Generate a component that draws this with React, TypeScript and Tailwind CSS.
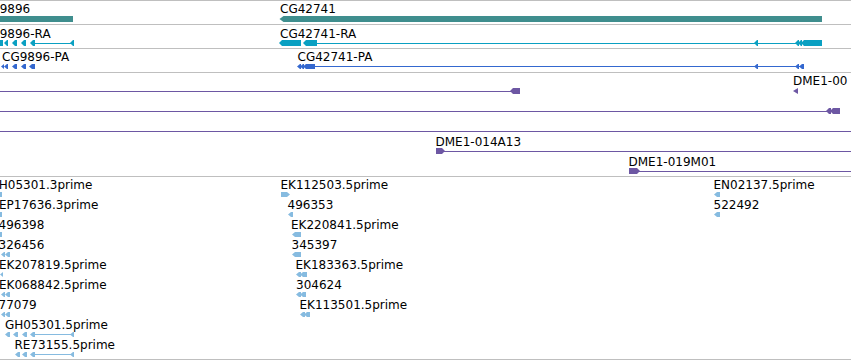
import type { ReactNode } from 'react';

const GENE = '#3f8e8e';
const RA = '#0aa0c2';
const PA = '#3468cf';
const CLONE = '#6d57a3';
const EST = '#86bbe0';

// left pointing exon: tip at x1, box to x2
function la(x1: number, x2: number, y1: number, y2: number, tip = 3) {
    const m = (y1 + y2) / 2;
    const k = Math.min(x1 + tip, x2);
    return `${x1},${m} ${k},${y1} ${x2},${y1} ${x2},${y2} ${k},${y2}`;
}
function ra(x1: number, x2: number, y1: number, y2: number, tip = 3) {
    const m = (y1 + y2) / 2;
    const k = Math.max(x2 - tip, x1);
    return `${x1},${y1} ${k},${y1} ${x2},${m} ${k},${y2} ${x1},${y2}`;
}

type Exon = [number, number];
type Feat = {
    label: string;
    lx: number;
    exons: Exon[];
    line?: [number, number];
    dir?: 'l' | 'r';
};

// one track: gray rule on top, a drawing in page coordinates below it
function Track({ top, inner, className, children }: { top: number; inner: number; className: string; children: ReactNode }) {
    return (
        <div className={`shrink-0 border-t border-[#bfbfbf] ${className}`}>
            <svg width={851} height={inner} viewBox={`0 ${top + 1} 851 ${inner}`} className="block" shapeRendering="crispEdges">
                {children}
            </svg>
        </div>
    );
}

function Row({ f, y1, y2, base, color }: { f: Feat; y1: number; y2: number; base: number; color: string }) {
    const mid = Math.floor((y1 + y2) / 2) + 0.5;
    return (
        <g>
            <text x={f.lx} y={base} fontSize={12} fill="#000" shapeRendering="auto">{f.label}</text>
            {f.line && <line x1={f.line[0]} x2={f.line[1]} y1={mid} y2={mid} stroke={color} strokeWidth={1} />}
            {f.exons.map(([a, b], i) => (
                <polygon key={i} points={f.dir === 'r' ? ra(a, b, y1, y2) : la(a, b, y1, y2)} fill={color} shapeRendering="auto" />
            ))}
        </g>
    );
}

const raRows: Feat[] = [
    { label: 'CG9896-RA', lx: -18, exons: [[-3, 3], [4, 8], [12, 17], [21, 26], [30, 35], [70, 74]], line: [35, 74] },
    { label: 'CG42741-RA', lx: 280, exons: [[279, 301], [303, 317], [754, 758], [795, 799], [798, 802], [801, 822]], line: [317, 802] },
];
const paRows: Feat[] = [
    { label: 'CG9896-PA', lx: 2, exons: [[1, 4], [4, 8], [12, 17], [21, 26], [29, 35]] },
    { label: 'CG42741-PA', lx: 297.5, exons: [[297, 301], [300, 304], [303, 315], [754, 758], [795, 799], [799, 804]], line: [315, 803] },
];

const est1: Feat[] = [
    { label: 'GH05301.3prime', lx: -10.5, exons: [[-4, 2]] },
    { label: 'EP17636.3prime', lx: -1, exons: [[-4, 2]] },
    { label: '496398', lx: -1.5, exons: [[-4, 2]] },
    { label: '326456', lx: -1.5, exons: [[1, 5], [5, 10]] },
    { label: 'EK207819.5prime', lx: -1, exons: [[0, 3]] },
    { label: 'EK068842.5prime', lx: -1, exons: [[1, 5], [5, 10]] },
    { label: '77079', lx: -1.5, exons: [[1, 5], [5, 10]] },
    { label: 'GH05301.5prime', lx: 5, exons: [[5, 10], [13, 18], [22, 27], [30, 35], [70, 74]], line: [35, 74] },
    { label: 'RE73155.5prime', lx: 14.5, exons: [[15, 20], [22, 27], [30, 35], [70, 74]], line: [35, 74] },
];
const est2: Feat[] = [
    { label: 'EK112503.5prime', lx: 280.5, exons: [[281, 290]], dir: 'r' },
    { label: '496353', lx: 287.5, exons: [[288, 293]] },
    { label: 'EK220841.5prime', lx: 291, exons: [[292, 301]] },
    { label: '345397', lx: 291.5, exons: [[292, 301]] },
    { label: 'EK183363.5prime', lx: 295.5, exons: [[296, 301], [300, 307]] },
    { label: '304624', lx: 296, exons: [[296, 301], [300, 306]] },
    { label: 'EK113501.5prime', lx: 299.5, exons: [[300, 305], [304, 310]] },
];
const est3: Feat[] = [
    { label: 'EN02137.5prime', lx: 713.5, exons: [[714, 720]] },
    { label: '522492', lx: 713.5, exons: [[714, 720]] },
];

export default function App() {
    return (
        <div className="w-[851px] h-[360px] overflow-hidden bg-white flex flex-col font-['DejaVu_Sans',sans-serif]">
            {/* genes */}
            <Track top={0} inner={23} className="h-[24px]">
                <text x={-18} y={13} fontSize={12} shapeRendering="auto">CG9896</text>
                <rect x={-5} y={16} width={78} height={6} fill={GENE} />
                <text x={280} y={13} fontSize={12} shapeRendering="auto">CG42741</text>
                <polygon points={la(279.5, 822, 16, 22, 4)} fill={GENE} shapeRendering="auto" />
            </Track>

            {/* transcripts */}
            <Track top={24} inner={23} className="h-[24px]">
                {raRows.map((f) => <Row key={f.label} f={f} y1={40} y2={46} base={38} color={RA} />)}
            </Track>

            {/* polypeptides */}
            <Track top={48} inner={23} className="h-[24px]">
                {paRows.map((f) => <Row key={f.label} f={f} y1={64} y2={69} base={61} color={PA} />)}
            </Track>

            {/* clones */}
            <Track top={72} inner={103} className="h-[104px]">
                <line x1={0} x2={512} y1={91} y2={91} stroke={CLONE} />
                <polygon points={la(510, 520, 88, 94)} fill={CLONE} shapeRendering="auto" />
                <text x={793} y={85} fontSize={12} shapeRendering="auto">DME1-00</text>
                <polygon points={la(793, 798, 88, 94, 5)} fill={CLONE} shapeRendering="auto" />

                <line x1={0} x2={830} y1={111} y2={111} stroke={CLONE} />
                <polygon points={la(826, 831, 108, 114)} fill={CLONE} shapeRendering="auto" />
                <polygon points={la(830, 840, 108, 114)} fill={CLONE} shapeRendering="auto" />

                <line x1={0} x2={851} y1={131} y2={131} stroke={CLONE} />

                <text x={435.5} y={146} fontSize={12} shapeRendering="auto">DME1-014A13</text>
                <line x1={440} x2={851} y1={151} y2={151} stroke={CLONE} />
                <polygon points={ra(436, 445, 148, 154)} fill={CLONE} shapeRendering="auto" />

                <text x={628.5} y={166} fontSize={12} shapeRendering="auto">DME1-019M01</text>
                <line x1={634} x2={851} y1={171} y2={171} stroke={CLONE} />
                <polygon points={ra(629, 640, 168, 174)} fill={CLONE} shapeRendering="auto" />
            </Track>

            {/* ESTs */}
            <Track top={176} inner={182} className="h-[184px] border-b">
                {[est1, est2, est3].map((col) =>
                    col.map((f, i) => (
                        <Row key={f.label + i} f={f} y1={192 + i * 20} y2={197 + i * 20} base={189 + i * 20} color={EST} />
                    ))
                )}
            </Track>
        </div>
    );
}
